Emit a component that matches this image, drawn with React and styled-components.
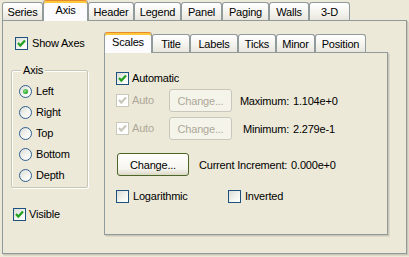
import styled, { createGlobalStyle, css } from "styled-components";

const GlobalStyle = createGlobalStyle`
  html, body {
    margin: 0;
    padding: 0;
    background: #ece9d8;
  }
  body {
    font-family: "Liberation Sans", Arial, sans-serif;
    font-size: 11px;
    letter-spacing: -0.2px;
    color: #000;
  }
`;

const Window = styled.div`
  width: 409px;
  height: 257px;
  box-sizing: border-box;
  padding: 0 2px 0 2px;
  display: flex;
  flex-direction: column;
  overflow: hidden;
`;

const TabStrip = styled.div`
  display: flex;
  align-items: flex-end;
  height: ${({ $h }) => $h}px;
  flex: 0 0 auto;
  position: relative;
  z-index: 1;
`;

const Tab = styled.div`
  box-sizing: border-box;
  width: ${({ $w }) => $w}px;
  height: 18px;
  display: flex;
  align-items: center;
  justify-content: center;
  padding-top: 1px;
  border: 1px solid #919b9c;
  border-bottom: none;
  border-radius: 3px 3px 0 0;
  background: linear-gradient(#ffffff, #f3f2ec 60%, #e8e6dc);
  white-space: nowrap;
  ${({ $active }) =>
    $active &&
    css`
      height: 21px;
      margin-bottom: -1px;
      padding-top: 0;
      padding-bottom: 3px;
      border-top: 1px solid #e68b2c;
      box-shadow: inset 0 2px 0 #ffc73c;
      background: #fcfcfe;
    `}
`;

const Panel = styled.div`
  box-sizing: border-box;
  height: ${({ $h }) => $h}px;
  width: ${({ $w }) => $w}px;
  border: 1px solid #919b9c;
  box-shadow: 1px 1px 0 #c9c6b6, 2px 2px 0 #dcd9c8;
  background: #ece9d8;
  display: flex;
`;

const LeftCol = styled.div`
  width: 101px;
  display: flex;
  flex-direction: column;
  padding-top: 16px;
`;

const RightCol = styled.div`
  display: flex;
  flex-direction: column;
  padding-top: 11px;
`;

const CheckLabel = styled.label`
  display: flex;
  align-items: center;
  gap: ${({ $gap }) => $gap ?? 3}px;
  height: 13px;
  line-height: 13px;
  width: ${({ $w }) => ($w ? `${$w}px` : "auto")};
  margin-left: ${({ $left }) => $left ?? 0}px;
  margin-top: ${({ $top }) => $top ?? 0}px;
  color: ${({ $disabled }) => ($disabled ? "#aca899" : "#000")};
  flex: 0 0 auto;
`;

const Box = styled.span`
  box-sizing: border-box;
  width: 13px;
  height: 13px;
  flex: 0 0 13px;
  border: 1px solid ${({ $disabled }) => ($disabled ? "#cac8bb" : "#1c5180")};
  background: ${({ $disabled }) =>
    $disabled ? "#fff" : "linear-gradient(135deg, #dcdcd7, #f5f5f1 60%, #ffffff)"};
  display: flex;
  align-items: center;
  justify-content: center;
`;

const Check = ({ on, disabled }) => (
  <Box $disabled={disabled}>
    {on && (
      <svg width="11" height="11" viewBox="0 0 11 11">
        <polyline
          points="2,5 4.3,7.6 9,2.4"
          fill="none"
          stroke={disabled ? "#cac8bb" : "#21a121"}
          strokeWidth="2.2"
        />
      </svg>
    )}
  </Box>
);

const RadioDot = styled.span`
  box-sizing: border-box;
  width: 13px;
  height: 13px;
  flex: 0 0 13px;
  border-radius: 50%;
  border: 1px solid #2f5f92;
  background: linear-gradient(135deg, #dcdcd7, #f4f4f0 55%, #ffffff);
  display: flex;
  align-items: center;
  justify-content: center;
  &::after {
    content: "";
    display: ${({ $on }) => ($on ? "block" : "none")};
    width: 5px;
    height: 5px;
    border-radius: 50%;
    background: radial-gradient(circle at 40% 40%, #8ee68e, #21a121 70%);
  }
`;

const GroupBox = styled.div`
  position: relative;
  box-sizing: border-box;
  width: 77px;
  height: 118px;
  margin: 20px 0 0 8px;
  border: 1px solid #c8c6b5;
  border-radius: 2px;
  box-shadow: inset 1px 1px 0 #fff, 1px 1px 0 #fff;
  padding: 14px 0 0 7px;
  display: flex;
  flex-direction: column;
  gap: 8px;
`;

const Legend = styled.span`
  position: absolute;
  top: -7px;
  left: 9px;
  padding: 0 2px;
  line-height: 13px;
  background: #ece9d8;
`;

const Row = styled.div`
  display: flex;
  align-items: center;
  height: ${({ $h }) => $h ?? 23}px;
  margin-top: ${({ $top }) => $top ?? 0}px;
`;

const Button = styled.button`
  box-sizing: border-box;
  width: ${({ $w }) => $w}px;
  height: 23px;
  margin-left: ${({ $left }) => $left ?? 0}px;
  padding: 0;
  font: inherit;
  letter-spacing: inherit;
  border-radius: 3px;
  border: 1px solid ${({ disabled }) => (disabled ? "#c9c7ba" : "#4b6526")};
  color: ${({ disabled }) => (disabled ? "#aca899" : "#000")};
  background: ${({ disabled }) =>
    disabled ? "#f5f4ea" : "linear-gradient(#ffffff, #f6f5ef 70%, #dcd8c8)"};
`;

const ValueLabel = styled.span`
  width: ${({ $w }) => $w}px;
  text-align: right;
  white-space: nowrap;
`;

const Value = styled.span`
  margin-left: 4px;
  white-space: nowrap;
`;

const Plain = styled.span`
  margin-left: 10px;
  white-space: nowrap;
`;

const InnerBody = styled.div`
  display: flex;
  flex-direction: column;
  padding: 19px 0 0 11px;
`;

const outerTabs = [
  ["Series", 41],
  ["Axis", 45],
  ["Header", 46],
  ["Legend", 47],
  ["Panel", 41],
  ["Paging", 47],
  ["Walls", 40],
  ["3-D", 41],
];

const innerTabs = [
  ["Scales", 48],
  ["Title", 38],
  ["Labels", 48],
  ["Ticks", 38],
  ["Minor", 39],
  ["Position", 51],
];

const radios = ["Left", "Right", "Top", "Bottom", "Depth"];

const App = () => {
  return (
    <Window>
      <GlobalStyle />
      <TabStrip $h={20}>
        {outerTabs.map(([t, w]) => (
          <Tab key={t} $w={w} $active={t === "Axis"}>
            {t}
          </Tab>
        ))}
      </TabStrip>
      <Panel $h={234} $w={405}>
        <LeftCol>
          <CheckLabel $left={12} $gap={4}>
            <Check on />
            Show Axes
          </CheckLabel>
          <GroupBox>
            <Legend>Axis</Legend>
            {radios.map((r) => (
              <CheckLabel key={r} $gap={4}>
                <RadioDot $on={r === "Left"} />
                {r}
              </CheckLabel>
            ))}
          </GroupBox>
          <CheckLabel $left={10} $top={20}>
            <Check on />
            Visible
          </CheckLabel>
        </LeftCol>
        <RightCol>
          <TabStrip $h={20}>
            {innerTabs.map(([t, w]) => (
              <Tab key={t} $w={w} $active={t === "Scales"}>
                {t}
              </Tab>
            ))}
          </TabStrip>
          <Panel $h={183} $w={284}>
            <InnerBody>
              <CheckLabel>
                <Check on />
                Automatic
              </CheckLabel>
              <Row $top={4}>
                <CheckLabel $w={53} $disabled>
                  <Check on disabled />
                  Auto
                </CheckLabel>
                <Button $w={63} disabled>
                  Change...
                </Button>
                <ValueLabel $w={57}>Maximum:</ValueLabel>
                <Value>1.104e+0</Value>
              </Row>
              <Row $top={5}>
                <CheckLabel $w={53} $disabled>
                  <Check on disabled />
                  Auto
                </CheckLabel>
                <Button $w={63} disabled>
                  Change...
                </Button>
                <ValueLabel $w={57}>Minimum:</ValueLabel>
                <Value>2.279e-1</Value>
              </Row>
              <Row $top={13}>
                <Button $w={72} $left={1}>
                  Change...
                </Button>
                <Plain>Current Increment:</Plain>
                <Value>0.000e+0</Value>
              </Row>
              <Row $top={14} $h={13}>
                <CheckLabel $w={112} $gap={4}>
                  <Check />
                  Logarithmic
                </CheckLabel>
                <CheckLabel $gap={4}>
                  <Check />
                  Inverted
                </CheckLabel>
              </Row>
            </InnerBody>
          </Panel>
        </RightCol>
      </Panel>
    </Window>
  );
};

export default App;
